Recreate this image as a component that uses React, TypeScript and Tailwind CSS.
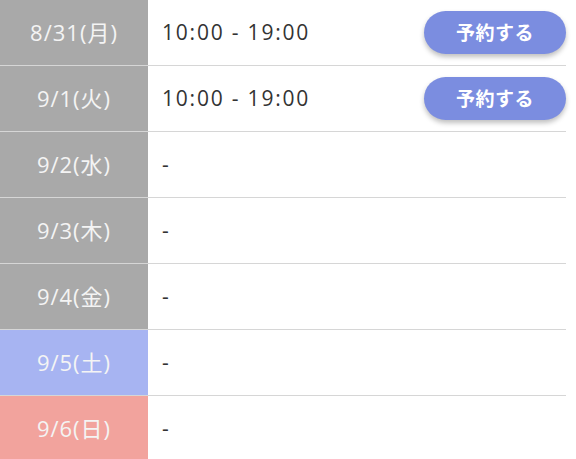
import React from "react";

type Row = { date: string; bg: string; time: string; button: boolean };

const rows: Row[] = [
  { date: "8/31(月)", bg: "bg-[#a9a9a9]", time: "10:00 - 19:00", button: true },
  { date: "9/1(火)", bg: "bg-[#a9a9a9]", time: "10:00 - 19:00", button: true },
  { date: "9/2(水)", bg: "bg-[#a9a9a9]", time: "-", button: false },
  { date: "9/3(木)", bg: "bg-[#a9a9a9]", time: "-", button: false },
  { date: "9/4(金)", bg: "bg-[#a9a9a9]", time: "-", button: false },
  { date: "9/5(土)", bg: "bg-[#a7b4f2]", time: "-", button: false },
  { date: "9/6(日)", bg: "bg-[#f2a39d]", time: "-", button: false },
];

export default function App() {
  return (
    <div
      className="w-[576px] h-[459px] bg-white overflow-hidden"
      style={{ fontFamily: '"Open Sans", "Noto Sans CJK JP", sans-serif' }}
    >
      <div className="w-[566px] flex flex-col">
        {rows.map((r, i) => (
          <div key={i} className="flex h-[66px] border-b border-[#d6d6d6] shrink-0">
            <div
              className={`w-[148px] shrink-0 ${r.bg} flex items-center justify-center text-[22px] tracking-[1px] text-[#f4f4f4]`}
            >
              {r.date}
            </div>
            <div className="flex-1 flex items-center justify-between pl-[14px] text-[21px] tracking-[1.8px] text-[#333333]">
              <span>{r.time}</span>
              {r.button && (
                <button
                  className="w-[142px] h-[43px] rounded-full bg-[#7b8de0] text-white text-[19px] font-bold tracking-[0.5px] shadow-[0_3px_5px_rgba(0,0,0,0.25)]"
                  style={{ fontFamily: '"Noto Sans CJK JP", sans-serif' }}
                >
                  予約する
                </button>
              )}
            </div>
          </div>
        ))}
      </div>
    </div>
  );
}
